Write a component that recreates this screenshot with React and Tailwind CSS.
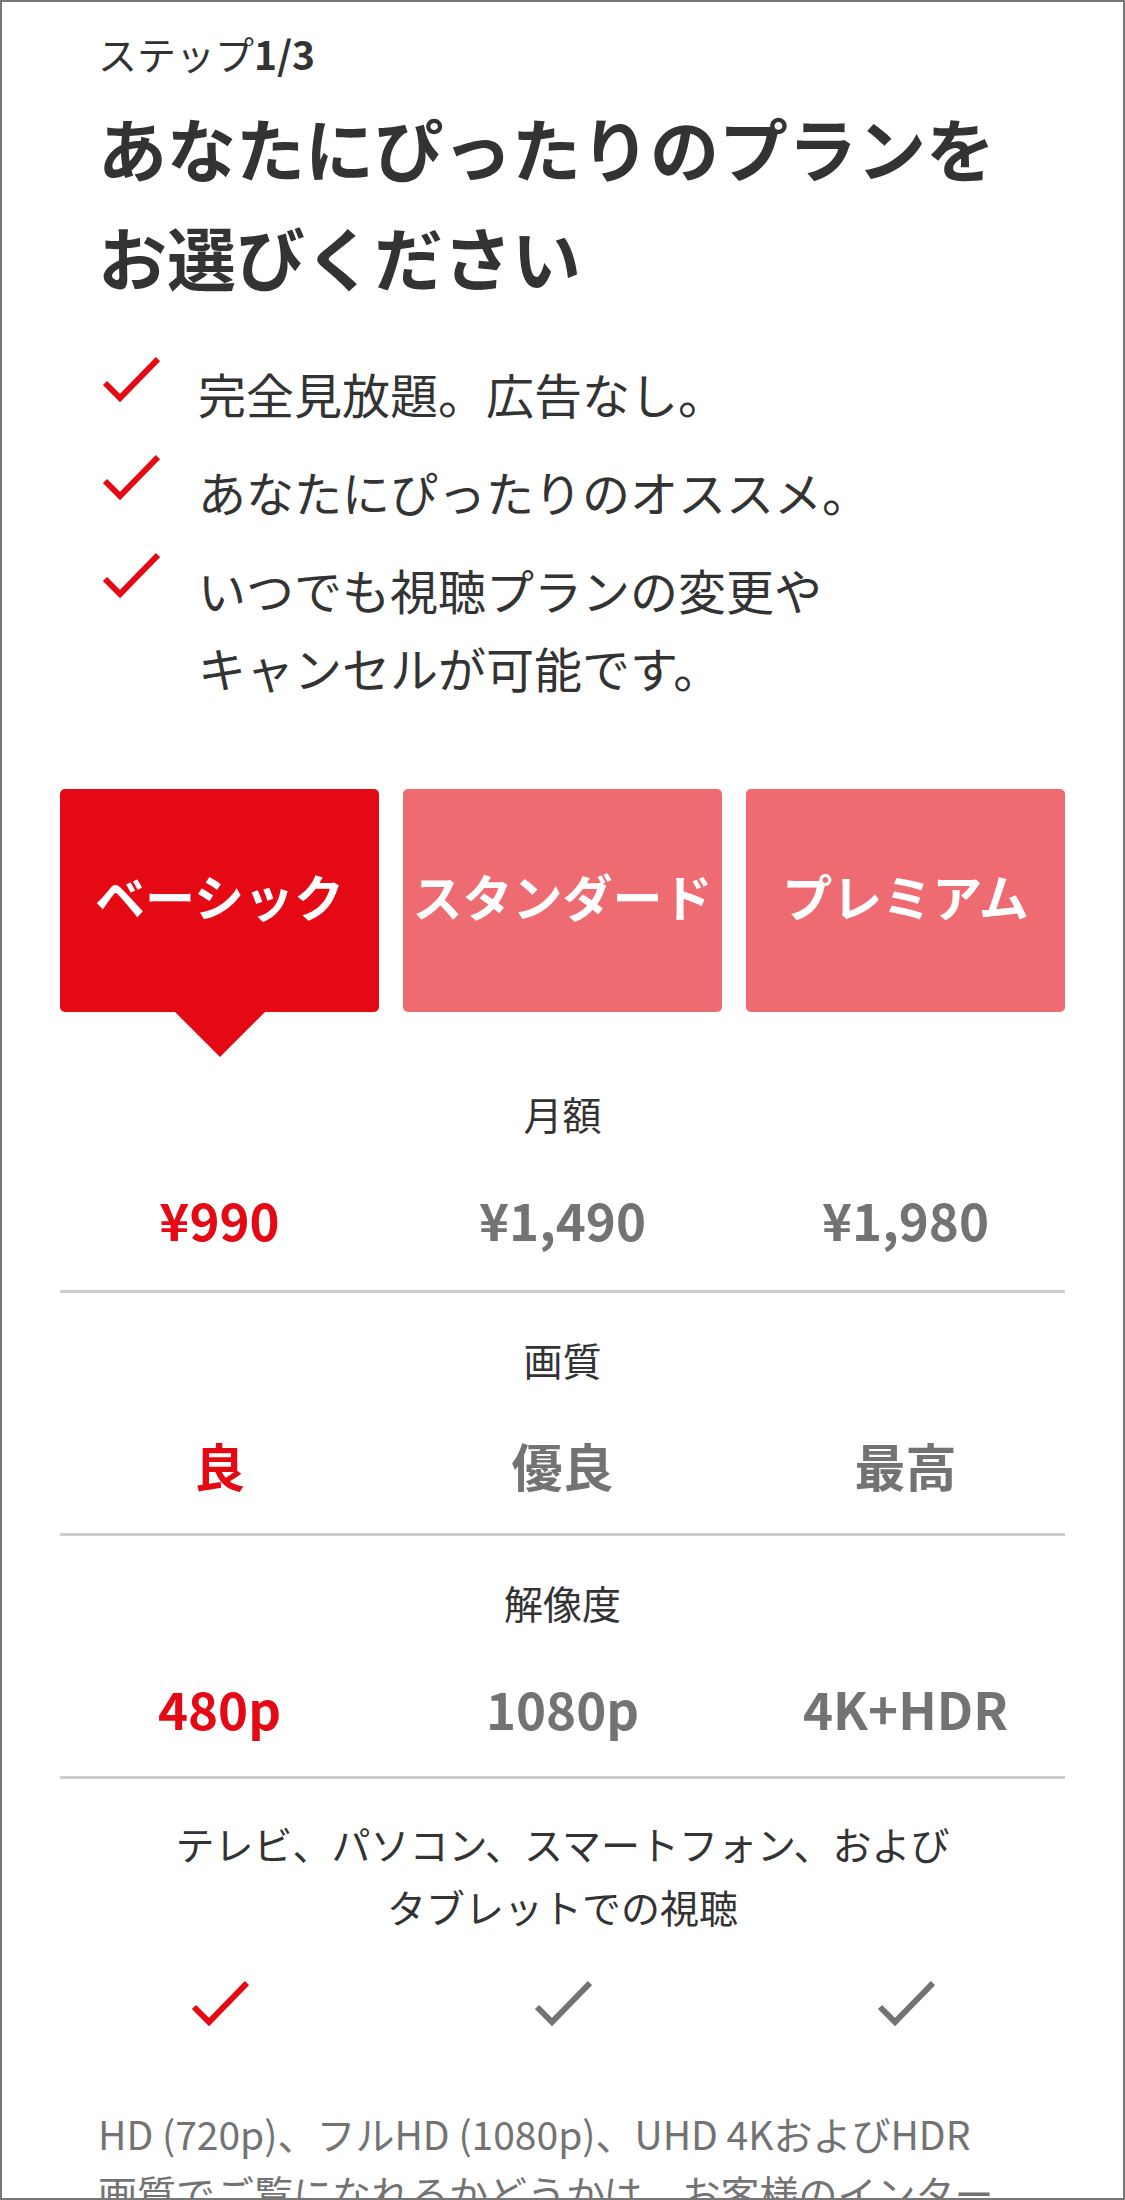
import React from "react";

// プラン選択画面（ステップ1/3）

const plans = [
  { name: "ベーシック", price: "¥990", quality: "良", resolution: "480p" },
  { name: "スタンダード", price: "¥1,490", quality: "優良", resolution: "1080p" },
  { name: "プレミアム", price: "¥1,980", quality: "最高", resolution: "4K+HDR" },
];

const selected = 0;

const Check = ({ color }) => (
  <svg width="58" height="46" viewBox="0 0 58 46" fill="none">
    <polyline points="3,27 18,42 56,3" stroke={color} strokeWidth="6" />
  </svg>
);

const PlanRow = ({ label, field, first }) => (
  <div className={first ? "pt-[72px] pb-[41px]" : "pt-[37px] pb-[38px]"}>
    <div className="text-center text-[39px] leading-[58px] text-[#333]">{label}</div>
    <div className="grid grid-cols-3 gap-[24px] mt-[47px]">
      {plans.map((p, i) => (
        <div
          key={p.name}
          className={`text-center text-[51px] leading-[60px] font-bold ${i === selected ? "text-[#e50914]" : "text-[#737373]"}`}
        >
          {p[field]}
        </div>
      ))}
    </div>
  </div>
);

const Divider = () => <div className="h-[3px] bg-[#cccccc]" />;

const Feature = ({ children }) => (
  <li className="flex items-start gap-[38px]">
    <div className="mt-[2px] ml-[4px] shrink-0">
      <Check color="#e50914" />
    </div>
    <span className="text-[48px] leading-[78px]">{children}</span>
  </li>
);

export default function App() {
  return (
    <div className="h-[2200px] overflow-hidden border-2 border-[#777] bg-white font-['Noto_Sans_CJK_JP','Liberation_Sans',sans-serif] text-[#333]">
      {/* ヘッダー部分 */}
      <div className="pt-[22px] px-[96px]">
        <div className="text-[39px] leading-[58px]">
          ステップ<span className="font-bold">1/3</span>
        </div>
        <h1 className="mt-[11px] text-[69px] leading-[109px] font-bold">
          あなたにぴったりのプランを
          <br />
          お選びください
        </h1>
        <ul className="mt-[43px] flex flex-col gap-[20px]">
          <Feature>完全見放題。広告なし。</Feature>
          <Feature>あなたにぴったりのオススメ。</Feature>
          <Feature>
            いつでも視聴プランの変更や
            <br />
            キャンセルが可能です。
          </Feature>
        </ul>
      </div>

      {/* プランのタブ */}
      <div className="mt-[83px] px-[58px]">
        <div className="grid grid-cols-3 gap-[24px]">
          {plans.map((p, i) => (
            <div
              key={p.name}
              className={`relative h-[223px] pb-[12px] rounded-[5px] flex items-center justify-center text-white font-bold text-[50px] leading-none whitespace-nowrap ${i === selected ? "bg-[#e50914]" : "bg-[#ef6b72]"}`}
            >
              {p.name}
              {i === selected && (
                <div className="absolute top-full left-1/2 -translate-x-1/2 w-0 h-0 border-l-[45px] border-r-[45px] border-t-[45px] border-l-transparent border-r-transparent border-t-[#e50914]" />
              )}
            </div>
          ))}
        </div>

        <PlanRow label="月額" field="price" first />
        <Divider />
        <PlanRow label="画質" field="quality" />
        <Divider />
        <PlanRow label="解像度" field="resolution" />
        <Divider />

        <div className="pt-[33px]">
          <div className="text-center text-[39px] leading-[63px] text-[#333]">
            テレビ、パソコン、スマートフォン、および
            <br />
            タブレットでの視聴
          </div>
          <div className="grid grid-cols-3 gap-[24px] mt-[42px]">
            {plans.map((p, i) => (
              <div key={p.name} className="flex justify-center">
                <Check color={i === selected ? "#e50914" : "#737373"} />
              </div>
            ))}
          </div>
        </div>
      </div>

      {/* 注意書き */}
      <p className="mt-[78px] px-[96px] text-[39px] leading-[59px] text-[#737373]">
        HD (720p)、フルHD (1080p)、UHD 4KおよびHDR
        <br />
        画質でご覧になれるかどうかは、お客様のインターネットサービスとデバイスの性能によって異なります。すべてのコンテンツがすべての画質 (HD、フルHD、UHD 4K、HDR) で視聴できるわけではありません。
      </p>
    </div>
  );
}
